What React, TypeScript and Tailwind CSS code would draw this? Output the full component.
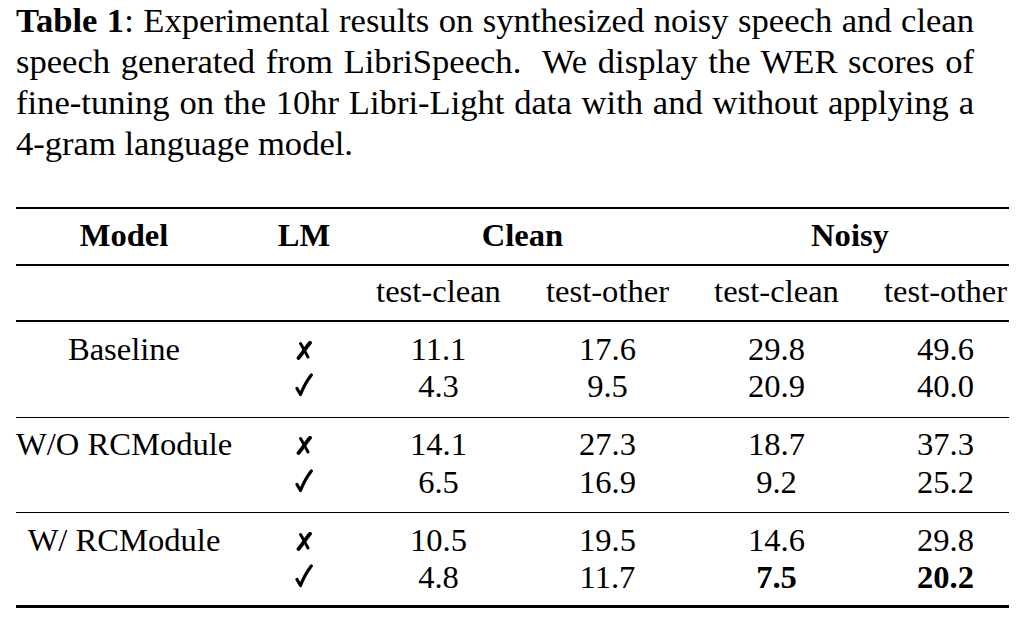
import React from "react";

type Row = {
  model?: string;
  lm: "x" | "check";
  cells: { value: string; bold?: boolean }[];
};

type Group = {
  rows: Row[];
  className: string;
};

const cols = "grid grid-cols-[216px_54px_125px_123px_125px_123px] gap-x-[45px] whitespace-nowrap";

const groups: Group[] = [
  {
    className: "pt-[9px] pb-[11px]",
    rows: [
      { model: "Baseline", lm: "x", cells: [{ value: "11.1" }, { value: "17.6" }, { value: "29.8" }, { value: "49.6" }] },
      { lm: "check", cells: [{ value: "4.3" }, { value: "9.5" }, { value: "20.9" }, { value: "40.0" }] },
    ],
  },
  {
    className: "pt-[8px] pb-[10.5px]",
    rows: [
      { model: "W/O RCModule", lm: "x", cells: [{ value: "14.1" }, { value: "27.3" }, { value: "18.7" }, { value: "37.3" }] },
      { lm: "check", cells: [{ value: "6.5" }, { value: "16.9" }, { value: "9.2" }, { value: "25.2" }] },
    ],
  },
  {
    className: "pt-[8.5px] pb-[8.5px]",
    rows: [
      { model: "W/ RCModule", lm: "x", cells: [{ value: "10.5" }, { value: "19.5" }, { value: "14.6" }, { value: "29.8" }] },
      {
        lm: "check",
        cells: [{ value: "4.8" }, { value: "11.7" }, { value: "7.5", bold: true }, { value: "20.2", bold: true }],
      },
    ],
  },
];

const captionLines = [
  "Experimental results on synthesized noisy speech and clean",
  "speech generated from LibriSpeech.\u00a0 We display the WER scores of",
  "fine-tuning on the 10hr Libri-Light data with and without applying a",
];

const CrossMark = () => (
  <svg width="18" height="19" viewBox="0 0 18 19" className="inline-block align-baseline" aria-label="no">
    <path d="M15 1.8 C11.5 6 7.5 12 3.5 17" fill="none" stroke="black" strokeWidth="3.8" strokeLinecap="round" />
    <path d="M5.5 2.5 C8 6.5 10.5 11.5 13 16" fill="none" stroke="black" strokeWidth="3" strokeLinecap="round" />
  </svg>
);

const CheckMark = () => (
  <svg width="18" height="24" viewBox="0 0 18 24" className="inline-block align-baseline" aria-label="yes">
    <path
      d="M2 15.5 L5.5 21.5 C8 15 12 7.5 16.3 2"
      fill="none"
      stroke="black"
      strokeWidth="3.2"
      strokeLinecap="round"
      strokeLinejoin="round"
    />
  </svg>
);

const Rule = ({ className }: { className: string }) => <div className={`w-full bg-black ${className}`} />;

const App: React.FC = () => {
  return (
    <div className="w-[1024px] h-[625px] bg-white text-black font-['Liberation_Serif',serif] overflow-hidden">
      <div className="ml-[16px] w-[958px] text-[34.6px] leading-[41px]">
        {captionLines.map((line, i) => (
          <div key={i} className="whitespace-nowrap text-justify [text-align-last:justify]">
            {i === 0 && (
              <>
                <span className="font-bold">Table 1</span>:{" "}
              </>
            )}
            {line}
          </div>
        ))}
        <div className="whitespace-nowrap">4-gram language model.</div>
      </div>

      <div className="ml-[16px] mt-[43px] w-[993px] text-[32.6px] leading-[37.5px]">
        <Rule className="h-[2px]" />
        <div className={`${cols} pt-[8px] pb-[9.5px] font-bold text-center`}>
          <div>Model</div>
          <div>LM</div>
          <div className="col-span-2">Clean</div>
          <div className="col-span-2 pr-[21px]">Noisy</div>
        </div>
        <Rule className="h-[1.5px]" />
        <div className={`${cols} pt-[7.5px] pb-[9.5px] text-center`}>
          <div />
          <div />
          <div>test-clean</div>
          <div>test-other</div>
          <div>test-clean</div>
          <div>test-other</div>
        </div>
        {groups.map((group, gi) => (
          <React.Fragment key={gi}>
            <Rule className="h-[1.5px]" />
            <div className={group.className}>
              {group.rows.map((row, ri) => (
                <div key={ri} className={`${cols} text-center`}>
                  <div>{row.model ?? ""}</div>
                  <div>{row.lm === "x" ? <CrossMark /> : <CheckMark />}</div>
                  {row.cells.map((cell, ci) => (
                    <div key={ci} className={cell.bold ? "font-bold" : ""}>
                      {cell.value}
                    </div>
                  ))}
                </div>
              ))}
            </div>
          </React.Fragment>
        ))}
        <Rule className="h-[2.5px]" />
      </div>
    </div>
  );
};

export default App;
